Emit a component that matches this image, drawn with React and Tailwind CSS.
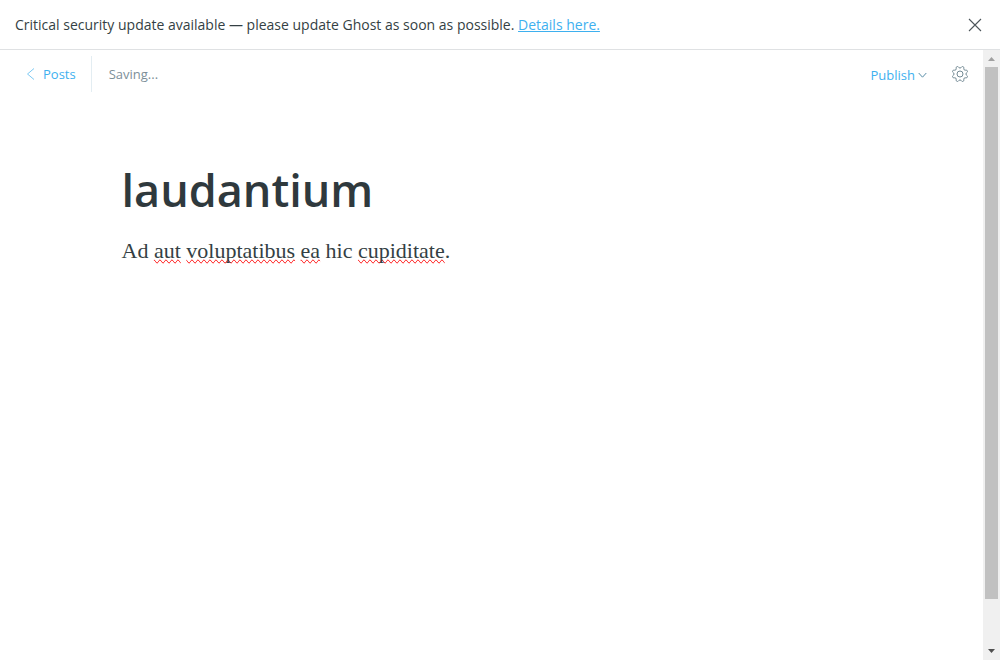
import React from "react";

const GEAR =
  "M10.546 2.438a1.957 1.957 0 0 0 2.908 0L14.4 1.4a1.959 1.959 0 0 1 3.41 1.413l-.071 1.4a1.958 1.958 0 0 0 2.051 2.054l1.4-.071a1.959 1.959 0 0 1 1.41 3.41l-1.042.94a1.96 1.96 0 0 0 0 2.909l1.042.94a1.959 1.959 0 0 1-1.413 3.41l-1.4-.071a1.958 1.958 0 0 0-2.056 2.056l.071 1.4A1.959 1.959 0 0 1 14.4 22.6l-.941-1.041a1.959 1.959 0 0 0-2.908 0L9.606 22.6A1.959 1.959 0 0 1 6.2 21.192l.072-1.4a1.958 1.958 0 0 0-2.056-2.056l-1.4.071A1.958 1.958 0 0 1 1.4 14.4l1.041-.94a1.96 1.96 0 0 0 0-2.909L1.4 9.606A1.958 1.958 0 0 1 2.813 6.2l1.4.071a1.958 1.958 0 0 0 2.056-2.06L6.2 2.81A1.959 1.959 0 0 1 9.606 1.4z";

function Misspelled({ children }) {
  return <span className="[text-decoration-line:spelling-error]">{children}</span>;
}

function UpdateBanner() {
  return (
    <aside className="flex h-[50px] shrink-0 items-center justify-between border-b border-[#dfe1e3] pr-[18px] pl-[15px] text-[#343f44]">
      <p className="text-sm">
        Critical security update available — please update Ghost as soon as possible.{" "}
        <a href="#details" className="text-[#3eb0ef] underline">
          Details here.
        </a>
      </p>
      <button type="button" aria-label="Close">
        <svg className="size-3.5" viewBox="0 0 14 14" fill="none" stroke="#4d565b" strokeWidth="1.1">
          <path d="M1 1l12 12M13 1L1 13" />
        </svg>
      </button>
    </aside>
  );
}

function Toolbar() {
  return (
    <header className="flex h-12 shrink-0 items-center justify-between pr-[15px] pl-[26px]">
      <div className="flex items-center">
        <a href="#posts" className="flex h-9 items-center gap-2 border-r border-[#e3edf2] pr-[15px] text-[#3eb0ef]">
          <svg className="h-3 w-[9px]" viewBox="0 0 9 12" fill="none" stroke="#7cc9f3">
            <path d="M8 .5L1.5 6L8 11.5" />
          </svg>
          Posts
        </a>
        <span className="pl-[17px] text-[#7c8f99]">Saving...</span>
      </div>
      <div className="flex items-center gap-[25px]">
        <button type="button" className="flex items-center gap-[3px] pt-0.5 text-[#3eb0ef]">
          Publish
          <svg className="h-2 w-[9px]" viewBox="0 0 9 8" fill="none" stroke="#5a8ea8">
            <path d="M.7 2L4.5 6.2L8.3 2" />
          </svg>
        </button>
        <button type="button" aria-label="Settings">
          <svg className="size-4" viewBox="0 0 24 24" fill="none" stroke="#738a94" strokeWidth="1.5">
            <path d={GEAR} />
            <circle cx="12" cy="12" r="4.5" />
          </svg>
        </button>
      </div>
    </header>
  );
}

function Scrollbar() {
  return (
    <div className="flex w-[17px] shrink-0 flex-col bg-[#f0f0f0] px-0.5" aria-hidden="true">
      <svg className="h-[17px] w-[13px] shrink-0" viewBox="0 0 13 17">
        <path d="M3 11L6.5 7L10 11z" fill="#a0a0a0" />
      </svg>
      <div className="grow-[532] bg-[#c1c1c1]" />
      <div className="grow-[44]" />
      <svg className="h-[17px] w-[13px] shrink-0" viewBox="0 0 13 17">
        <path d="M3 6L6.5 10L10 6z" fill="#505050" />
      </svg>
    </div>
  );
}

export default function App() {
  return (
    <div className="flex h-screen flex-col bg-white font-['Open_Sans','Noto_Sans',sans-serif] text-[13px] leading-5">
      <UpdateBanner />
      <div className="flex min-h-0 grow">
        <main className="flex min-w-0 grow flex-col">
          <Toolbar />
          <article className="mx-auto w-full max-w-[740px] grow pt-16">
            <input
              aria-label="Post title"
              defaultValue="laudantium"
              spellCheck={false}
              className="block h-14 w-full text-[45px] leading-[56px] font-semibold text-[#2f393d] outline-none"
            />
            <p className="pt-[17px] font-['Liberation_Serif',serif] text-[22px] leading-8 text-[#343f44]">
              Ad <Misspelled>aut</Misspelled> <Misspelled>voluptatibus</Misspelled>{" "}
              <Misspelled>ea</Misspelled> hic <Misspelled>cupiditate</Misspelled>.
            </p>
          </article>
        </main>
        <Scrollbar />
      </div>
    </div>
  );
}
